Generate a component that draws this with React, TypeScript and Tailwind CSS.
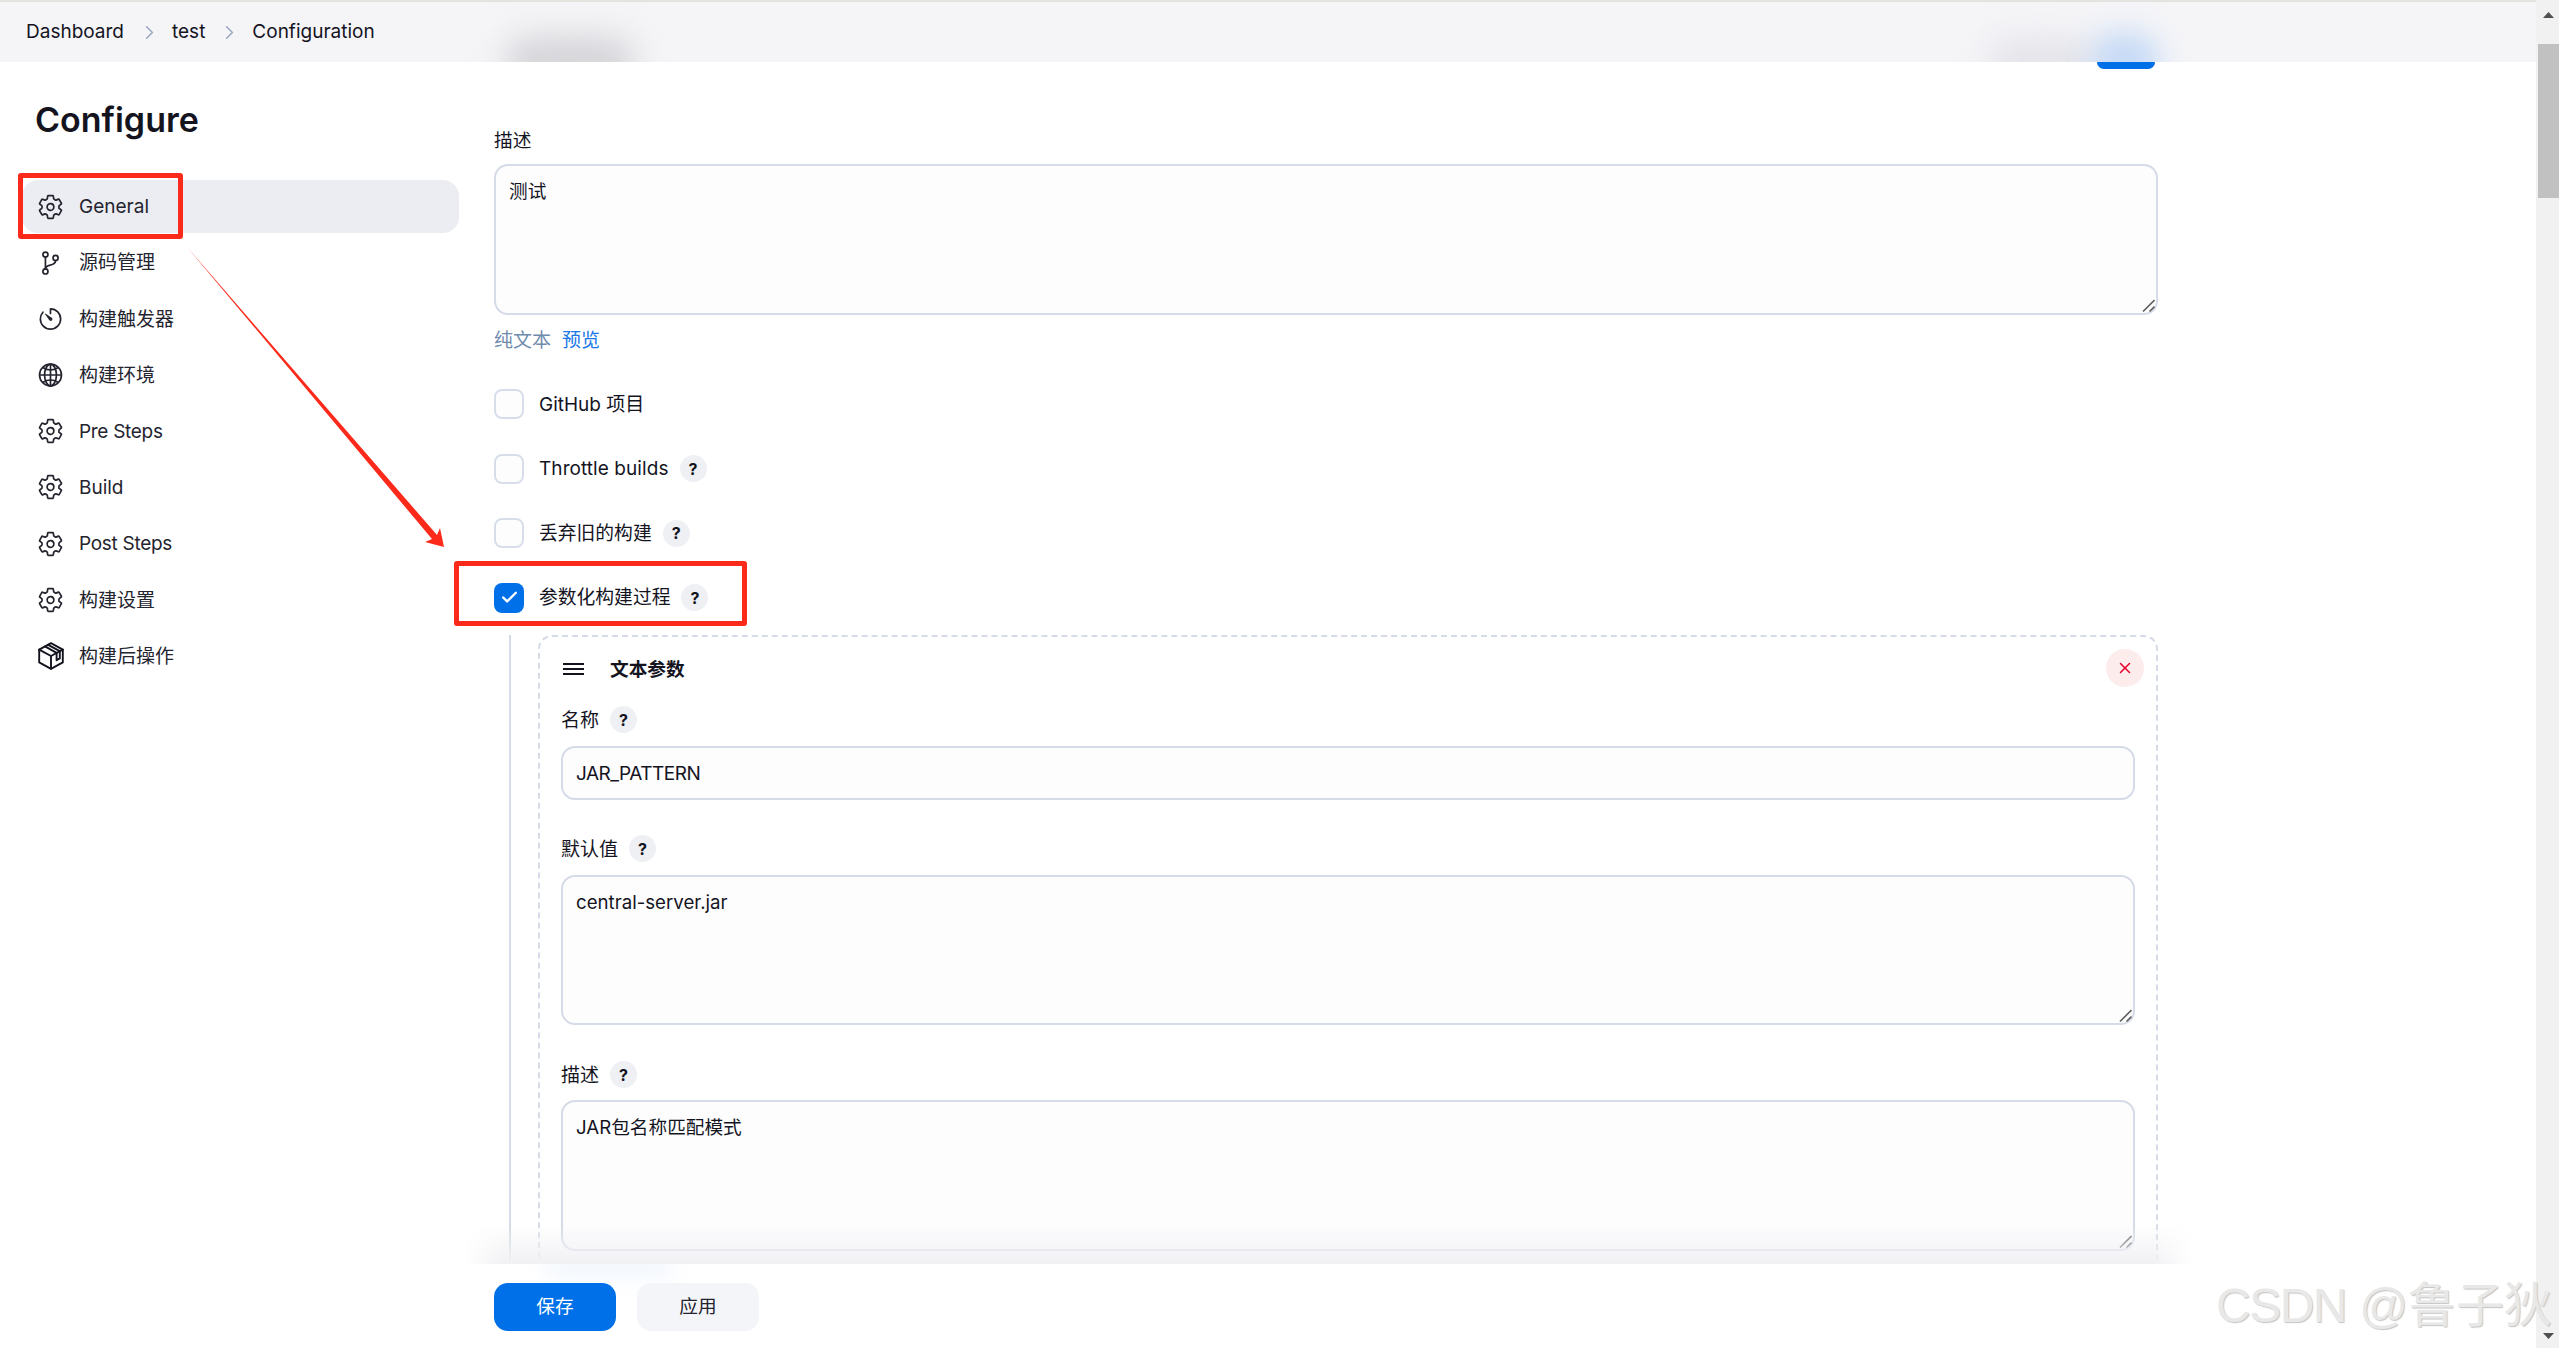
import React from "react";
import { IoSettingsOutline, IoGitBranchOutline, IoTimerOutline, IoGlobeOutline } from "react-icons/io5";
import { Check, X, ChevronRight } from "lucide-react";

function PackageIcon() {
  return (
    <svg width="26" height="28" viewBox="0 0 26 28" fill="none" stroke="#14141f" strokeWidth="1.9" strokeLinejoin="round" strokeLinecap="round">
      <path d="M13 1.2L24.8 7.6V20.4L13 26.8L1.2 20.4V7.6Z" />
      <path d="M1.2 7.6L13 14L24.8 7.6M13 14V26.8" />
      <path d="M7 4.4L18.6 10.9V18.2L21.8 16.4V9.2L10.2 2.8" />
    </svg>
  );
}

const nav: { label: string; icon: React.ReactNode; active?: boolean; cls?: string }[] = [
  { label: "General", icon: <IoSettingsOutline size={30} />, active: true },
  { label: "源码管理", icon: <IoGitBranchOutline size={30} /> },
  { label: "构建触发器", icon: <IoTimerOutline size={30} /> },
  { label: "构建环境", icon: <IoGlobeOutline size={30} /> },
  { label: "Pre Steps", icon: <IoSettingsOutline size={30} />, cls: "tracking-[-0.3px]" },
  { label: "Build", icon: <IoSettingsOutline size={30} /> },
  { label: "Post Steps", icon: <IoSettingsOutline size={30} />, cls: "tracking-[-0.3px]" },
  { label: "构建设置", icon: <IoSettingsOutline size={30} /> },
  { label: "构建后操作", icon: <PackageIcon /> },
];

function Help() {
  return (
    <span className="flex h-[27px] w-[27px] shrink-0 items-center justify-center rounded-full bg-[#eef0f4] text-[16px] font-bold leading-none text-[#14141f]">
      ?
    </span>
  );
}

function CheckRow({ label, help, checked, cls }: { label: string; help?: boolean; checked?: boolean; cls: string }) {
  return (
    <div className="flex h-[30px] items-center">
      {checked ? (
        <span className="flex h-[30px] w-[30px] items-center justify-center rounded-[8px] bg-[#0070e8] text-white">
          <Check size={19} strokeWidth={3} />
        </span>
      ) : (
        <span className="h-[30px] w-[30px] rounded-[8px] border-2 border-[#d8dee9] bg-[#fdfdfe]" />
      )}
      <span className={`ml-[15px] pt-[1px] leading-[26px] ${cls}`}>{label}</span>
      {help && <span className="ml-[11px]"><Help /></span>}
    </div>
  );
}

function FieldLabel({ label, className }: { label: string; className: string }) {
  return (
    <div className={`flex h-[26px] items-center gap-[11px] text-[19px] leading-[26px] ${className}`}>
      <span className="pt-[2px]">{label}</span>
      <Help />
    </div>
  );
}

function Area({ value, className }: { value: string; className: string }) {
  return (
    <div className={`relative ${className}`}>
      <textarea
        readOnly
        defaultValue={value}
        className="block h-full w-full resize-none rounded-[14px] border-2 border-[#d5dbe7] bg-[#fdfdfe] px-[13px] pb-[12px] pt-[13px] text-[18.67px] leading-[26px] text-[#14141f] outline-none"
      />
      <svg className="absolute bottom-[3px] right-[3px]" width="13" height="13" viewBox="0 0 13 13" fill="none" stroke="#606060" strokeWidth="1.6">
        <path d="M1 12.5L12.5 1M7.5 12.5L12.5 7.5" />
      </svg>
    </div>
  );
}

export default function App() {
  return (
    <div className="relative flex h-[1348px] w-[2559px] overflow-hidden bg-white font-['Inter','Noto_Sans_CJK_SC',sans-serif] text-[#14141f]">
      <div className="flex min-w-0 flex-1 flex-col">
        <div className="h-[2px] shrink-0 bg-[#e3e3e0]" />
        <header className="relative flex h-[60px] shrink-0 items-center overflow-hidden bg-[#f5f5f8] pl-[26px] text-[19px]">
          <div className="absolute left-[505px] top-[35px] h-[50px] w-[130px] rounded-full bg-[#d4d4d8] blur-[16px]" />
          <div className="absolute left-[1990px] top-[38px] h-[44px] w-[110px] rounded-full bg-[#e2e2e8] blur-[16px]" />
          <div className="absolute left-[2090px] top-[30px] h-[56px] w-[70px] rounded-full bg-[#c6daf5] blur-[14px]" />
          <span className="relative">Dashboard</span>
          <ChevronRight size={23} strokeWidth={1.7} className="relative ml-[14px] text-[#9aa8c0]" />
          <span className="relative ml-[11px]">test</span>
          <ChevronRight size={23} strokeWidth={1.7} className="relative ml-[13px] text-[#9aa8c0]" />
          <span className="relative ml-[11px]">Configuration</span>
        </header>

        <div className="flex min-h-0 flex-1">
          <aside className="w-[494px] shrink-0 pl-[22px]">
            <h1 className="ml-[13px] mt-[37px] text-[34px] font-semibold leading-[42px]">Configure</h1>
            <nav className="mt-[39px] flex w-[437px] flex-col gap-[3.2px]">
              {nav.map((n) => (
                <div
                  key={n.label}
                  className={`flex h-[53px] items-center rounded-[16px] pl-[15px] text-[19px] text-[#24242f] ${n.active ? "bg-[#ecedf2]" : ""}`}
                >
                  <span className="flex w-[27px] justify-center">{n.icon}</span>
                  <span className={`ml-[15px] pt-[2px] ${n.cls ?? ""}`}>{n.label}</span>
                </div>
              ))}
            </nav>
          </aside>

          <div className="flex min-w-0 flex-1 flex-col">
            <main className="relative min-h-0 flex-1 overflow-hidden">
              <div className="absolute left-[1603px] top-0 h-[7px] w-[58px] rounded-b-[20px] bg-[#0070e8]" />
              <div className="w-[1664px]">
                <div className="mt-[64px] h-[26px] pt-[2px] text-[18.67px] leading-[26px]">描述</div>
                <Area value="测试" className="mt-[12px] h-[151px]" />
                <div className="mt-[12px] flex h-[26px] gap-[11px] pt-[1px] text-[19px] leading-[26px]">
                  <span className="text-[#6f8bad]">纯文本</span>
                  <span className="text-[#1a79e8]">预览</span>
                </div>
                <div className="mt-[36px] flex flex-col gap-[34.67px]">
                  <CheckRow label="GitHub 项目" cls="text-[19px]" />
                  <CheckRow label="Throttle builds" help cls="text-[19px] tracking-[0.07px]" />
                  <CheckRow label="丢弃旧的构建" help cls="text-[18.8px]" />
                  <CheckRow label="参数化构建过程" help checked cls="text-[18.8px]" />
                </div>
                <div className="ml-[15px] mt-[22px] border-l-2 border-[#d5dbe7] pl-[27px]">
                  <div className="relative rounded-[14px] border-2 border-dashed border-[#d5dbe7] px-[21px] pb-[40px] pt-[19px]">
                    <span className="absolute right-[12px] top-[12px] flex h-[38px] w-[38px] items-center justify-center rounded-full bg-[#fcecec] text-[#e6002b]">
                      <X size={18} strokeWidth={2} />
                    </span>
                    <div className="flex h-[26px] items-center pl-[2px]">
                      <svg width="21" height="14" viewBox="0 0 21 14" fill="none" stroke="#14141f" strokeWidth="2">
                        <path d="M0 2h21M0 7h21M0 12h21" />
                      </svg>
                      <span className="ml-[26px] pt-[2px] text-[18.67px] font-bold leading-[26px]">文本参数</span>
                    </div>
                    <FieldLabel label="名称" className="mt-[25px]" />
                    <div className="mt-[13px] flex h-[54px] items-center rounded-[14px] border-2 border-[#d5dbe7] bg-[#fdfdfe] px-[13px] pt-[2px] text-[19px] tracking-[-0.5px]">
                      JAR_PATTERN
                    </div>
                    <FieldLabel label="默认值" className="mt-[36px]" />
                    <Area value="central-server.jar" className="mt-[13px] h-[150px]" />
                    <FieldLabel label="描述" className="mt-[37px]" />
                    <Area value="JAR包名称匹配模式" className="mt-[12px] h-[151px]" />
                  </div>
                </div>
              </div>
            </main>
            <footer className="relative flex h-[84px] shrink-0 items-start gap-[21px] overflow-hidden pt-[19px] text-[18.67px]">
              <div className="absolute left-[50px] top-[-10px] h-[26px] w-[130px] rounded-full bg-[#f3f7fd] blur-[10px]" />
              <button className="relative h-[48px] w-[122px] rounded-[14px] bg-[#0070e8] text-white">保存</button>
              <button className="relative h-[48px] w-[122px] rounded-[14px] bg-[#f4f5f9] text-[#24242f]">应用</button>
            </footer>
          </div>
        </div>
      </div>

      <div className="relative w-[23px] shrink-0 bg-[#f1f1f1] pl-[2px]">
        <svg className="absolute left-[7px] top-[12px]" width="11" height="6" viewBox="0 0 11 6" fill="#505050"><path d="M5.5 0L11 6H0z" /></svg>
        <div className="mt-[44px] h-[154px] bg-[#c1c1c1]" />
        <svg className="absolute bottom-[9px] left-[7px]" width="11" height="6" viewBox="0 0 11 6" fill="#505050"><path d="M0 0h11L5.5 6z" /></svg>
      </div>

      <div className="pointer-events-none absolute bottom-[84px] left-[464px] h-[40px] w-[1730px] bg-gradient-to-b from-transparent to-[#f1f1f4] [mask-image:linear-gradient(to_right,transparent,black_40px,black_1690px,transparent)]" />

      <div className="absolute left-[18px] top-[173px] h-[66px] w-[165px] rounded-[3px] border-[5px] border-[#fb2a1a]" />
      <div className="absolute left-[454px] top-[561px] h-[65px] w-[293px] rounded-[3px] border-[5px] border-[#fb2a1a]" />
      <svg className="pointer-events-none absolute left-0 top-0" width="2559" height="1348">
        <polygon points="187,247 437,535 440,528 444,547 425,542 432,539" fill="#fb2a1a" />
      </svg>

      <div className="pointer-events-none absolute left-[2216px] top-[1276px] whitespace-nowrap font-['Liberation_Sans','Noto_Sans_CJK_SC',sans-serif] text-[48px] leading-[60px] text-[#e8e8e8] [text-shadow:1px_1px_1px_#c4c4c4]">
        <span className="tracking-[-1.5px]">CSDN</span> @鲁子狄
      </div>
    </div>
  );
}
